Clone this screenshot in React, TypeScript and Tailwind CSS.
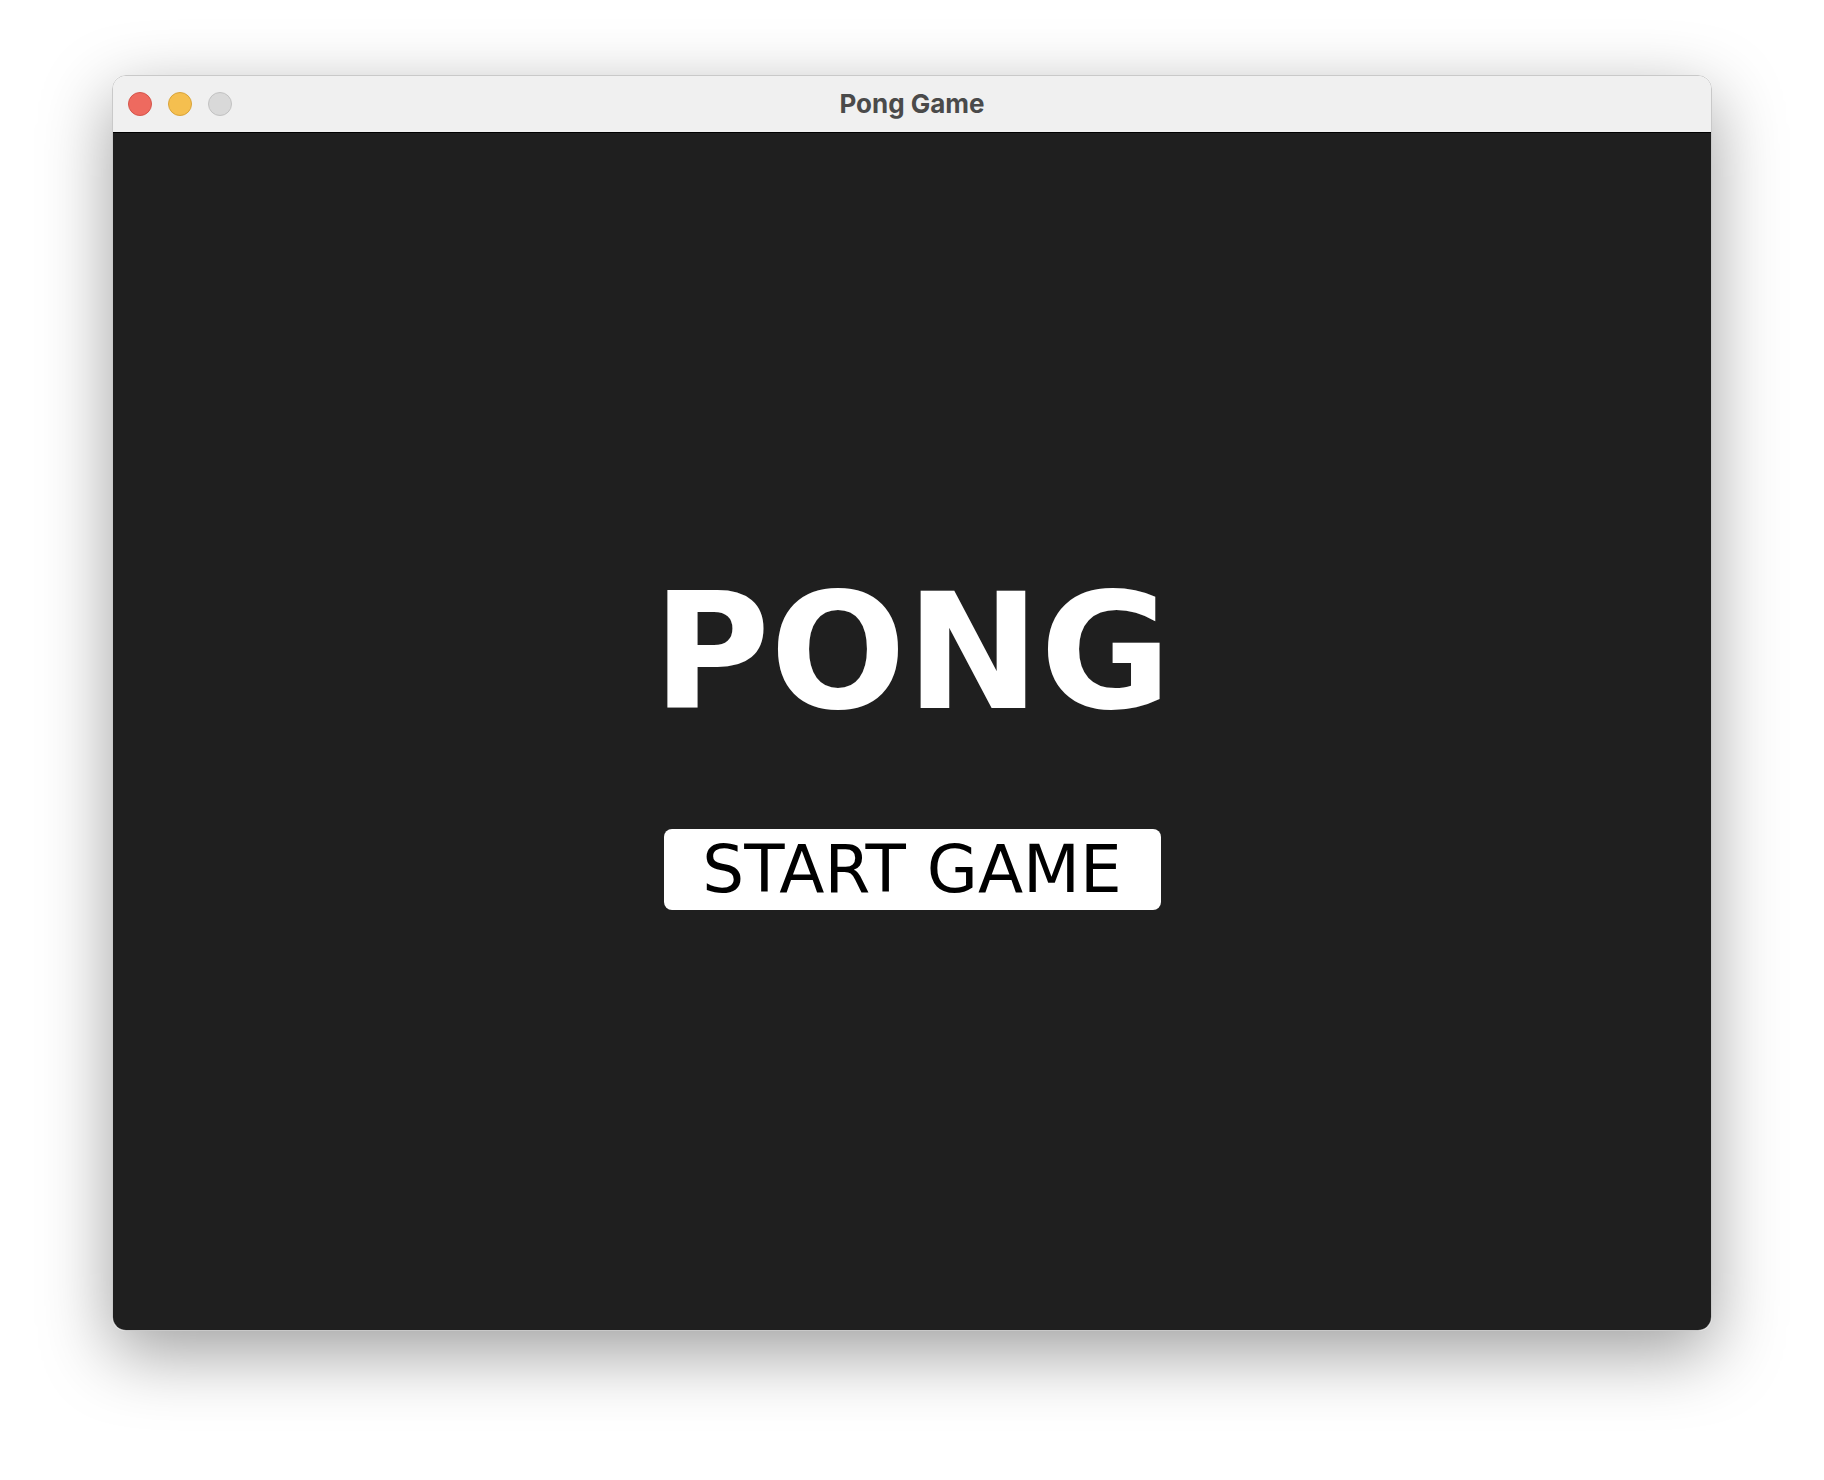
import React from "react";

export default function App() {
  return (
    <div className="w-[1824px] h-[1480px] bg-white pt-[75px] pl-[112px]">
      <div className="w-[1600px] h-[1256px] rounded-[14px] overflow-hidden flex flex-col shadow-[0_22px_70px_rgba(0,0,0,0.38)] border border-[#c9c9c9]">
        <div className="h-[57px] bg-[#f0f0f0] relative flex items-center justify-center border-b border-black pb-[2px]">
          <div className="absolute left-[15px] top-[16px] flex gap-[16px]">
            <div className="w-[24px] h-[24px] rounded-full bg-[#ee6a5f] border border-[#d5554b]" />
            <div className="w-[24px] h-[24px] rounded-full bg-[#f5bf4f] border border-[#d9a43a]" />
            <div className="w-[24px] h-[24px] rounded-full bg-[#d9d9d9] border border-[#c2c2c2]" />
          </div>
          <span className="font-['Inter',sans-serif] font-bold text-[26px] text-[#4a4a4a]">Pong Game</span>
        </div>
        <div className="flex-1 bg-[#1f1f1f] flex flex-col items-center justify-center pt-[20px]">
          <div className="font-['DejaVu_Sans',sans-serif] font-bold text-[160px] leading-none text-white">PONG</div>
          <div className="mt-[96px] w-[497px] h-[81px] bg-white rounded-[8px] flex items-center justify-center font-['DejaVu_Sans',sans-serif] text-[66px] leading-none text-black">
            START GAME
          </div>
        </div>
      </div>
    </div>
  );
}
